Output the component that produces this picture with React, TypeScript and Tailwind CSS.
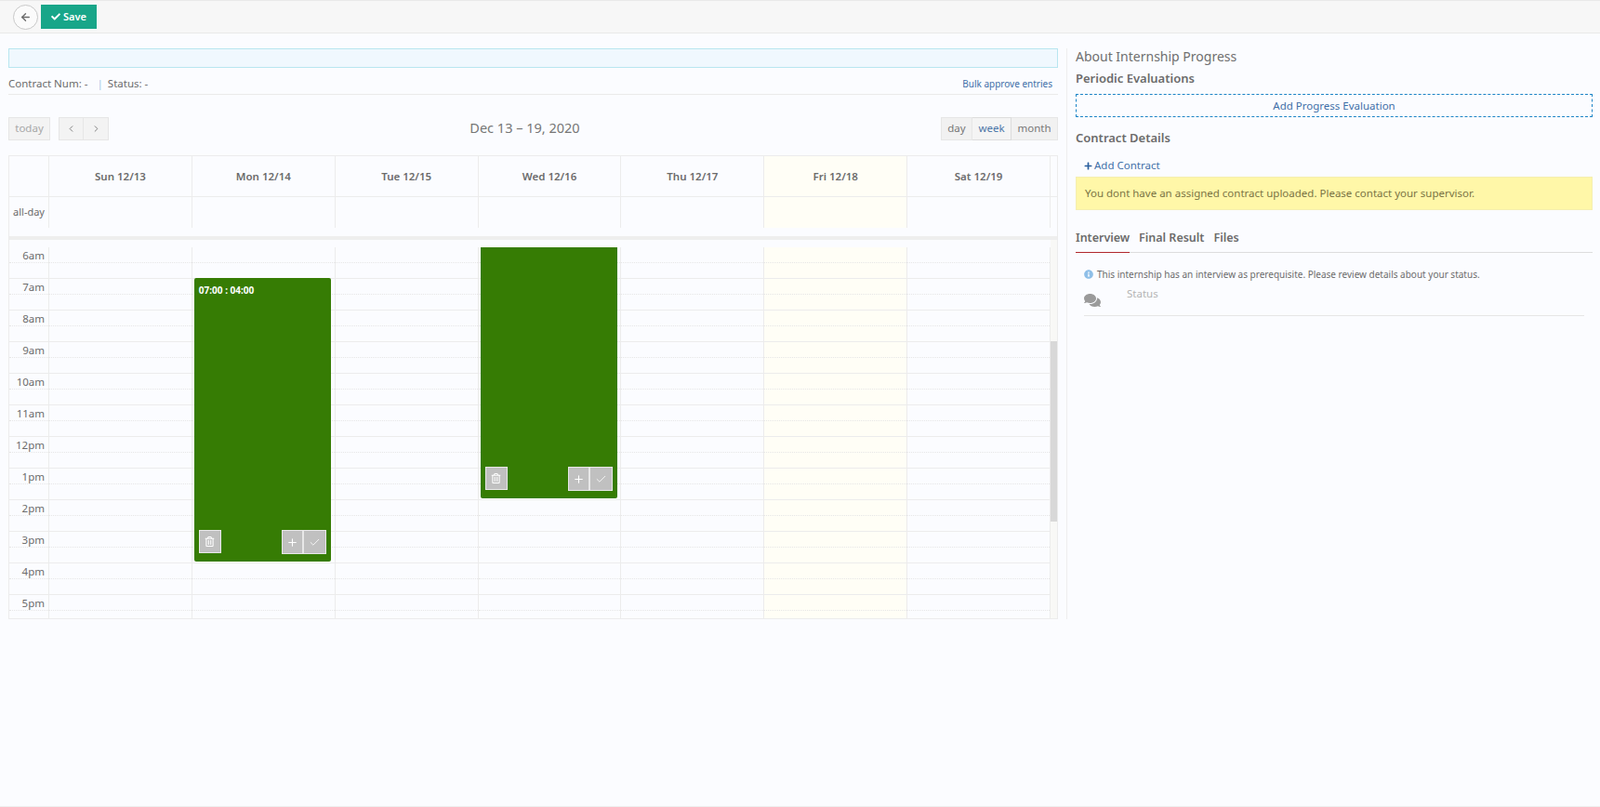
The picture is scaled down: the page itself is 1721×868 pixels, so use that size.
import React from 'react';
import { ArrowLeft, ChevronLeft, ChevronRight, Plus, Check } from 'lucide-react';
import { FaCheck, FaComments, FaInfoCircle, FaPlus, FaRegTrashAlt } from 'react-icons/fa';

const days = [
  { label: 'Sun 12/13' },
  { label: 'Mon 12/14' },
  { label: 'Tue 12/15' },
  { label: 'Wed 12/16' },
  { label: 'Thu 12/17' },
  { label: 'Fri 12/18', today: true },
  { label: 'Sat 12/19' },
];

const hours = ['6am', '7am', '8am', '9am', '10am', '11am', '12pm', '1pm', '2pm', '3pm', '4pm', '5pm'];

const EventCard = ({ className, title }: { className: string; title?: string }) => (
  <div className={`absolute left-[2px] w-[147px] bg-[#367c04] ${className}`}>
    {title && <div className="pl-[5px] pt-[6px] text-[10px] font-bold leading-[14px] text-white">{title}</div>}
    <div className="absolute bottom-[9px] left-[5px] flex h-[25px] w-[24px] items-center justify-center border border-[#e8e8e8] bg-[#c0c0c0] text-white">
      <FaRegTrashAlt size={11} />
    </div>
    <div className="absolute bottom-[8px] right-[5px] flex">
      <div className="flex h-[26px] w-[23px] items-center justify-center border border-[#e8e8e8] bg-[#c0c0c0] text-white">
        <Plus size={13} strokeWidth={2} />
      </div>
      <div className="flex h-[26px] w-[25px] items-center justify-center border border-[#e8e8e8] bg-[#c0c0c0] text-white">
        <Check size={13} strokeWidth={1.5} />
      </div>
    </div>
  </div>
);

const HourSlots = () => (
  <>
    {hours.map((h) => (
      <div key={h} className="h-[34px] shrink-0">
        <div className="h-[17px] border-b border-dotted border-[#e6e6e6]" />
        <div className="h-[17px] border-b border-[#ececec]" />
      </div>
    ))}
  </>
);

const App = () => {
  return (
    <div className="flex h-[868px] flex-col overflow-hidden border-b border-[#eeeeee] bg-[#fbfcff] font-['Open_Sans',sans-serif] text-[12px] text-[#6b6b6b]">
      {/* Top bar */}
      <div className="flex h-[36px] shrink-0 items-center gap-[3px] border-y border-[#e9e9e9] bg-[#f7f7f7] pl-[14px]">
        <button className="flex h-[27px] w-[27px] items-center justify-center rounded-full border border-[#c8c8c8] bg-[#fbfbfb] text-[#6d6d6d]">
          <ArrowLeft size={13} strokeWidth={2.5} />
        </button>
        <button className="flex h-[26px] w-[60px] items-center justify-center gap-[3px] bg-[#18a689] text-[11px] font-semibold text-white">
          <FaCheck size={10} />
          Save
        </button>
      </div>

      <div className="flex min-h-0 flex-1 items-start pt-[16px]">
        {/* Left column */}
        <div className="ml-[9px] w-[1129px] shrink-0">
          <div className="h-[21px] border border-[#b8e6f0] bg-[#f0f8fe]" />
          <div className="flex h-[29px] items-center justify-between border-b border-[#eaeaea] pr-[6px] pt-[6px]">
            <div className="flex items-center text-[11.5px]">
              <span>Contract Num: -</span>
              <span className="ml-[10px] mr-[5px] text-[#9cc7e8]">|</span>
              <span>Status: -</span>
            </div>
            <a className="text-[10px] text-[#3f6fa8]">Bulk approve entries</a>
          </div>

          {/* Toolbar */}
          <div className="mt-[23px] flex h-[26px] items-center justify-between">
            <div className="flex">
              <div className="flex h-[25px] w-[45px] items-center justify-center border border-[#e6e6e6] bg-[#f3f3f3] text-[11.5px] text-[#a8a8a8]">today</div>
              <div className="ml-[9px] flex h-[25px] w-[27px] items-center justify-center border border-[#e6e6e6] bg-[#f3f3f3] text-[#777777]">
                <ChevronLeft size={11} />
              </div>
              <div className="flex h-[25px] w-[27px] items-center justify-center border border-[#e6e6e6] border-l-0 bg-[#f3f3f3] text-[#777777]">
                <ChevronRight size={11} />
              </div>
            </div>
            <div className="text-[14.5px] text-[#767676]">Dec 13 – 19, 2020</div>
            <div className="flex text-[11.5px]">
              <div className="flex h-[25px] w-[34px] items-center justify-center border border-[#e6e6e6] bg-[#f1f1f1] text-[#777777]">day</div>
              <div className="flex h-[25px] w-[42px] items-center justify-center border border-l-0 border-[#dddddd] bg-[#f4f4f4] text-[#4d77a8]">week</div>
              <div className="flex h-[25px] w-[50px] items-center justify-center border border-l-0 border-[#e6e6e6] bg-[#f1f1f1] text-[#777777]">month</div>
            </div>
          </div>

          {/* Calendar */}
          <div className="mt-[16px] flex h-[499px] flex-col border border-[#ececec]">
            <div className="flex h-[44px] shrink-0 border-b border-[#ececec]">
              <div className="w-[43px] shrink-0 border-r border-[#ececec]" />
              {days.map((d) => (
                <div key={d.label} className={`flex flex-1 items-center justify-center border-r border-[#ececec] text-[11.5px] font-semibold ${d.today ? 'bg-[#fffef6]' : ''}`}>
                  {d.label}
                </div>
              ))}
              <div className="w-[7px] shrink-0" />
            </div>
            <div className="flex h-[33px] shrink-0">
              <div className="flex w-[43px] shrink-0 items-center justify-center border-r border-[#ececec] text-[11px]">all-day</div>
              {days.map((d) => (
                <div key={d.label} className={`flex-1 border-r border-[#ececec] ${d.today ? 'bg-[#fffef6]' : ''}`} />
              ))}
              <div className="w-[7px] shrink-0" />
            </div>
            <div className="mt-[9px] h-[4px] shrink-0 bg-[#eeeeee]" />

            <div className="flex min-h-0 flex-1 overflow-hidden">
              {/* Time axis */}
              <div className="w-[43px] shrink-0">
                <div className="h-[8px]" />
                <div className="relative border-r border-[#ececec]">
                  <HourSlots />
                  <div className="absolute inset-0">
                    {hours.map((h) => (
                      <div key={h} className="h-[34px] pr-[4px] pt-[1px] text-right text-[11.5px] leading-[16px]">{h}</div>
                    ))}
                  </div>
                </div>
              </div>
              {/* Day columns */}
              {days.map((d) => (
                <div key={d.label} className="min-w-0 flex-1">
                  <div className="h-[8px]" />
                  <div className={`relative border-r border-[#ececec] ${d.today ? 'bg-[#fffef6]' : ''}`}>
                    <HourSlots />
                    {d.label === 'Mon 12/14' && <EventCard className="top-[33px] h-[305px] rounded-[2px]" title="07:00 : 04:00" />}
                    {d.label === 'Wed 12/16' && <EventCard className="top-0 h-[270px] rounded-b-[2px]" />}
                  </div>
                </div>
              ))}
              {/* Scrollbar */}
              <div className="w-[7px] shrink-0 bg-[#f8f8f6]">
                <div className="mt-[109px] h-[194px] bg-[#d8d8d8]" />
              </div>
            </div>
          </div>
        </div>

        {/* Right column */}
        <div className="ml-[9px] h-[614px] flex-1 border-l border-[#eeeeee] pl-[9px] pr-[8px]">
          <div className="mt-[-1px] text-[14px] leading-[20px] text-[#6f6f6f]">About Internship Progress</div>
          <div className="mt-[4px] text-[13px] font-semibold leading-[18px]">Periodic Evaluations</div>
          <div className="mt-[8px] flex h-[25px] items-center justify-center border border-dashed border-[#1c84c6] text-[11.5px] text-[#3f6fa8]">
            Add Progress Evaluation
          </div>
          <div className="mt-[13px] text-[13px] font-semibold leading-[18px]">Contract Details</div>
          <div className="mt-[12px] flex h-[18px] items-center gap-[2px] pl-[9px] text-[11.5px] text-[#3f6fa8]">
            <FaPlus size={9} className="text-[#2b5f9e]" />
            Add Contract
          </div>
          <div className="mt-[3px] flex h-[36px] items-center border border-[#f5eeb0] bg-[#fff7a8] pl-[9px] text-[11.5px] text-[#7a7444]">
            You dont have an assigned contract uploaded. Please contact your supervisor.
          </div>

          {/* Tabs */}
          <div className="mt-[21px] flex h-[25px] gap-[10px] border-b border-[#dddddd] text-[12.5px] font-semibold">
            <div className="h-[25px] w-[58px] border-b border-[#b0282d] pr-0 leading-[18px]">Interview</div>
            <div className="leading-[18px]">Final Result</div>
            <div className="leading-[18px]">Files</div>
          </div>
          <div className="px-[9px]">
            <div className="mt-[16px] flex items-center gap-[4px] text-[10px] leading-[14px]">
              <FaInfoCircle size={10} className="text-[#8fbfe8]" />
              This internship has an interview as prerequisite. Please review details about your status.
            </div>
            <div className="flex h-[38px] border-b border-[#e6e6e6] pt-[6px]">
              <FaComments size={18} className="mt-[6px] text-[#9a9a9a]" />
              <div className="ml-[28px] text-[11.5px] leading-[16px] text-[#b4b4b4]">Status</div>
            </div>
          </div>
        </div>
      </div>
    </div>
  );
};

export default App;
